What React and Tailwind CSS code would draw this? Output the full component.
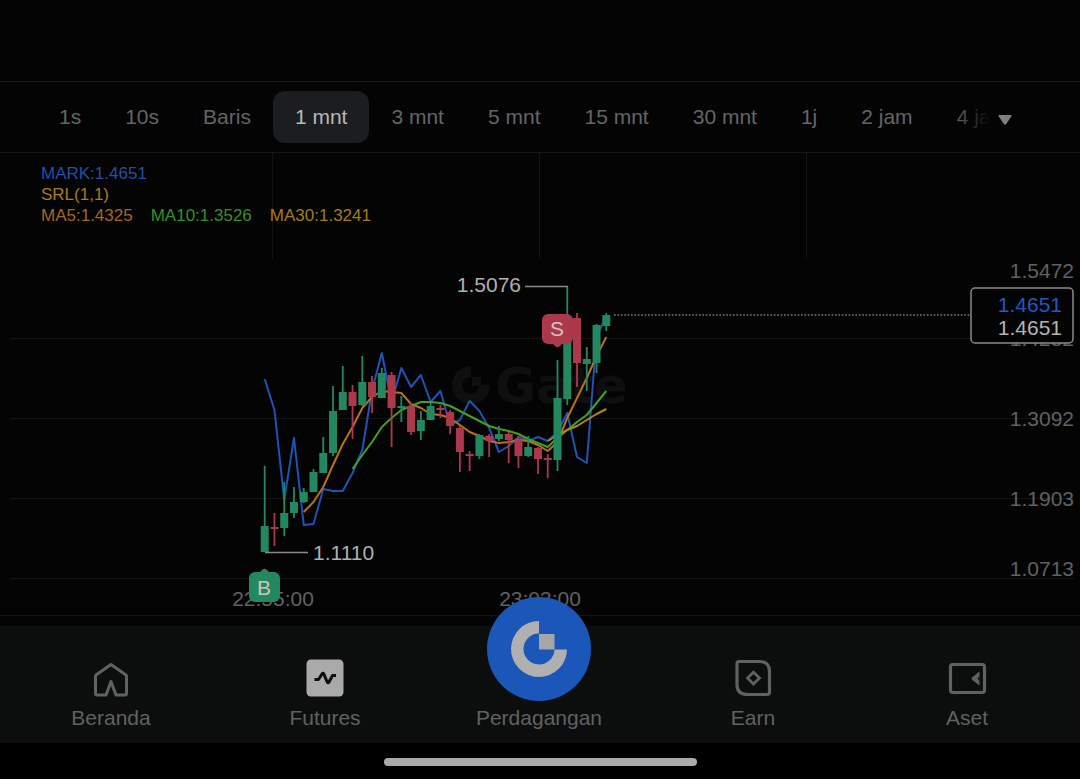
import clsx from 'clsx'

const intervals = ['1s', '10s', 'Baris', '1 mnt', '3 mnt', '5 mnt', '15 mnt', '30 mnt', '1j', '2 jam', '4 jam']

const GREEN = '#23875f'
const RED = '#ab394b'

const FIRST_X = 264.7
const STEP = 9.76

// [up, high, low, bodyTop, bodyBottom]
const candles = [
  [1, 466, 552, 526, 552],
  [0, 513, 546, 527, 529],
  [1, 482, 536, 513, 528],
  [1, 487, 518, 502, 513],
  [1, 488, 503, 492, 502],
  [1, 469, 492, 472, 492],
  [1, 437, 473, 453, 473],
  [1, 386, 456, 411, 453],
  [1, 366, 410, 392, 410],
  [0, 385, 439, 392, 406],
  [1, 356, 406, 382, 405],
  [0, 376, 413, 382, 397],
  [1, 368, 398, 373, 398],
  [0, 372, 447, 375, 408],
  [1, 396, 422, 406, 408],
  [0, 403, 435, 406, 432],
  [1, 411, 440, 420, 431],
  [1, 403, 420, 406, 420],
  [0, 405, 418, 408, 410],
  [0, 410, 434, 412, 426],
  [0, 426, 472, 428, 452],
  [0, 451, 471, 454, 456],
  [1, 434, 459, 435, 456],
  [0, 434, 457, 436, 441],
  [1, 426, 441, 434, 439],
  [0, 432, 463, 434, 440],
  [0, 436, 468, 440, 456],
  [1, 436, 457, 447, 456],
  [0, 447, 474, 448, 459],
  [0, 454, 478, 458, 460],
  [1, 360, 471, 398, 460],
  [1, 286, 405, 320, 399],
  [0, 313, 387, 318, 363],
  [1, 347, 391, 359, 364],
  [1, 324, 373, 325, 363],
  [1, 313, 331, 315, 326],
]

const averages = [
  {
    name: 'MARK',
    color: '#1f53b4',
    start: 0,
    values: [
      379, 410, 500, 438, 525, 524, 489, 491, 491, 473, 450, 390, 353, 402, 368, 387, 375, 402, 391, 425, 420, 401,
      411, 428, 452, 446, 437, 441, 437, 441, 432, 413, 457, 463, 337, 316,
    ],
  },
  {
    name: 'MA5',
    color: '#b8721d',
    start: 4,
    values: [
      512, 502, 487, 465, 444, 427, 408, 397, 391, 392, 393, 404, 408, 414, 415, 418, 425, 432, 436, 441, 443, 442,
      440, 441, 445, 451, 442, 418, 398, 378, 356, 337,
    ],
  },
  {
    name: 'MA10',
    color: '#44a022',
    start: 9,
    values: [
      469, 455, 442, 427, 418, 410, 406, 402, 402, 403, 406, 411, 416, 421, 426, 429, 431, 434, 439, 443, 447, 438,
      430, 422, 415, 403, 391,
    ],
  },
  { name: 'MA30', color: '#b58418', start: 29, values: [441, 435, 430, 426, 420, 414, 409] },
]

const priceLabels = [
  ['1.5472', 278],
  ['1.4282', 346],
  ['1.3092', 426],
  ['1.1903', 506],
  ['1.0713', 576],
]

function IntervalBar() {
  return (
    <nav className="flex items-center border-y border-[#151616] py-[9px] pl-[37px] pr-[68px]">
      <div className="relative min-w-0 flex-1 overflow-hidden">
        <div className="flex">
          {intervals.map((label) => (
            <button
              key={label}
              type="button"
              className={clsx(
                'h-[52px] shrink-0 rounded-xl px-[22px] text-[21px]',
                label === '1 mnt' ? 'bg-[#1c1d1f] text-[#b8b8b8]' : 'text-[#646566]'
              )}
            >
              {label}
            </button>
          ))}
        </div>
        <div className="pointer-events-none absolute inset-y-0 right-0 w-9 bg-linear-to-r from-transparent to-[#040404]" />
      </div>
      <button type="button" aria-label="Interval lainnya" className="ml-2 pt-1.5">
        <svg viewBox="0 0 14 10" className="h-[10px] w-[14px]" fill="#808080">
          <path d="M1.3 0h11.4q1.6 0 .7 1.2L8.2 9q-1.2 1.4-2.4 0L.6 1.2Q-.3 0 1.3 0z" />
        </svg>
      </button>
    </nav>
  )
}

function Legend() {
  return (
    <div className="absolute left-[41px] top-[10px] text-[17px] leading-[21px]">
      <p className="text-[#234fa6]">MARK:1.4651</p>
      <p className="text-[#a87c1d]">SRL(1,1)</p>
      <p className="flex gap-[18px]">
        <span className="text-[#a5661f]">MA5:1.4325</span>
        <span className="text-[#359025]">MA10:1.3526</span>
        <span className="text-[#a67a18]">MA30:1.3241</span>
      </p>
    </div>
  )
}

function Candle({ index, data }) {
  const [up, high, low, top, bottom] = data
  const x = FIRST_X + index * STEP
  return (
    <g fill={up ? GREEN : RED}>
      <rect x={x - 0.9} y={high} width="1.8" height={low - high} />
      <rect x={x - 4} y={top} width="8" height={bottom - top} />
    </g>
  )
}

function Chart() {
  return (
    <section className="relative">
      <svg viewBox="0 153 1080 473" className="block h-auto w-full" fontSize="21" role="img" aria-label="Grafik harga">
        <g fill="#131515">
          {[339, 419, 499, 579].map((y) => (
            <rect key={y} x="10" y={y - 1} width="1064" height="1" />
          ))}
          {[273, 540, 807].map((x) => (
            <rect key={x} x={x - 1} y="153" width="1" height="106" />
          ))}
          <rect x="0" y="615" width="1080" height="1" />
        </g>

        {/* watermark */}
        <g fill="#0e1010">
          <path d="M471 366v11a8.500 8.500 0 1 0 8 8h11a19 19 0 1 1-19-19z" />
          <rect x="472" y="377" width="9" height="9" />
          <text x="495" y="403" fontSize="50" fontWeight="700" fontFamily="DejaVu Sans, sans-serif">
            Gate
          </text>
        </g>

        <g fill="#606162" textAnchor="end">
          {priceLabels.map(([price, y]) => (
            <text key={price} x="1074" y={y}>
              {price}
            </text>
          ))}
        </g>
        <g fill="#606162" textAnchor="middle">
          <text x="273" y="606">22:55:00</text>
          <text x="540" y="606">23:03:00</text>
        </g>

        {averages.map(({ name, color, start, values }) => (
          <polyline
            key={name}
            points={values.map((y, i) => `${FIRST_X + (start + i) * STEP},${y}`).join(' ')}
            fill="none"
            stroke={color}
            strokeWidth="2"
            strokeLinejoin="round"
          />
        ))}
        {candles.map((data, i) => (
          <Candle key={i} index={i} data={data} />
        ))}

        <g fill="none" stroke="#8a8a8a" strokeWidth="1.5">
          <path d="M525 286.500h43" />
          <path d="M265 552.500h43" />
          <path d="M614 315h357" strokeDasharray="1.7 1.7" stroke="#777" />
        </g>
        <g fill="#b0b0b0">
          <text x="521" y="292" textAnchor="end">
            1.5076
          </text>
          <text x="313" y="560">1.1110</text>
        </g>

        <g textAnchor="middle" fill="#cfc4c4">
          <path d="M552 343l3.500 3.500q2 1.500 4 0l3.500-3.500z" fill={RED} />
          <rect x="542" y="314" width="31" height="30" rx="6" fill={RED} />
          <text x="557" y="336">S</text>
          <path d="M259 573l3.500-3.500q2-1.500 4 0l3.500 3.500z" fill={GREEN} />
          <rect x="249" y="572" width="31" height="30" rx="6" fill={GREEN} />
          <text x="264" y="595">B</text>
        </g>

        <rect x="971" y="288" width="102" height="55" rx="4" fill="#040404" stroke="#8a8a8a" strokeWidth="1.500" />
        <g textAnchor="end">
          <text x="1062" y="312" fill="#2059c0">
            1.4651
          </text>
          <text x="1062" y="335" fill="#b4b4b4">
            1.4651
          </text>
        </g>
      </svg>
      <Legend />
    </section>
  )
}

function HomeIcon() {
  return (
    <svg viewBox="0 0 40 40" className="size-10" fill="none" stroke="#606162" strokeWidth="3" strokeLinejoin="round">
      <path d="M20 6.500 35 17q.5.400.5 1.200V35.500q0 1.500-1.500 1.500h-9L20 23.500 15 37H6q-1.500 0-1.500-1.500V18.200q0-.8.500-1.200z" />
    </svg>
  )
}

function FuturesIcon() {
  return (
    <svg viewBox="0 0 40 40" className="size-10" fill="none">
      <rect x="1.500" y="1.500" width="37" height="37" rx="4.500" fill="#aaaaaa" />
      <path
        d="M9.500 21.500h4l3.500-5.500q1-1.400 1.800 0l3.400 8q.9 1.600 1.800 0l3.500-6.500h3.500"
        stroke="#0c0e0e"
        strokeWidth="3"
        strokeLinejoin="round"
      />
    </svg>
  )
}

function EarnIcon() {
  return (
    <svg viewBox="0 0 40 40" className="size-10" fill="none" stroke="#606162" strokeWidth="3.200">
      <path d="M6 3.500h20.500q10 0 10 10V34q0 2.500-2.500 2.500H14.500q-10.500 0-10.500-10V6q0-2.500 2-2.500z" />
      <path d="M20.500 14.200 26.500 20l-6 6-6-6z" strokeWidth="2.800" />
    </svg>
  )
}

function AssetIcon() {
  return (
    <svg viewBox="0 0 40 40" className="size-10" fill="none" stroke="#606162" strokeWidth="3.200">
      <rect x="3.500" y="6.500" width="34" height="28" rx="2.500" />
      <path d="M32.500 13.500v14l-7.200-5.600q-1.300-1.300 0-2.600z" fill="#606162" stroke="none" />
      <path d="M32.500 18.500v4.200l-2.200-2.100z" fill="#0c0e0e" stroke="none" />
    </svg>
  )
}

function TradeIcon() {
  return (
    <svg viewBox="0 0 104 104" className="-mt-[66px] size-[104px]">
      <circle cx="52" cy="52" r="52" fill="#1b57b8" />
      <path d="M52 24v12.500A15.500 15.500 0 1 0 67.500 52.500H80A28 28 0 1 1 52 24z" fill="#b0b0b0" />
      <rect x="52" y="37" width="15.500" height="15.500" fill="#a6a6a6" />
    </svg>
  )
}

const tabs = [
  { label: 'Beranda', icon: HomeIcon },
  { label: 'Futures', icon: FuturesIcon },
  { label: 'Perdagangan', icon: TradeIcon },
  { label: 'Earn', icon: EarnIcon },
  { label: 'Aset', icon: AssetIcon },
]

function TabBar() {
  return (
    <nav className="relative grid h-[117px] grid-cols-5 bg-[#0c0e0e] pb-[11px] pl-1 pr-1.5">
      {tabs.map(({ label, icon: Icon }) => (
        <a key={label} href="#" className="flex flex-col items-center justify-end text-[21px] leading-7 text-[#606162]">
          <Icon />
          <span className={label === 'Perdagangan' ? 'mt-[3px]' : 'mt-1.5'}>{label}</span>
        </a>
      ))}
    </nav>
  )
}

export default function App() {
  return (
    <div className="flex min-h-screen flex-col bg-[#040404] font-['Liberation_Sans',Arial,sans-serif]">
      <header className="h-[81px]" />
      <IntervalBar />
      <Chart />
      <TabBar />
      <footer className="flex flex-1 items-start justify-center bg-black pt-[15px]">
        <div className="h-2 w-[313px] rounded-full bg-[#aaaaaa]" />
      </footer>
    </div>
  )
}
